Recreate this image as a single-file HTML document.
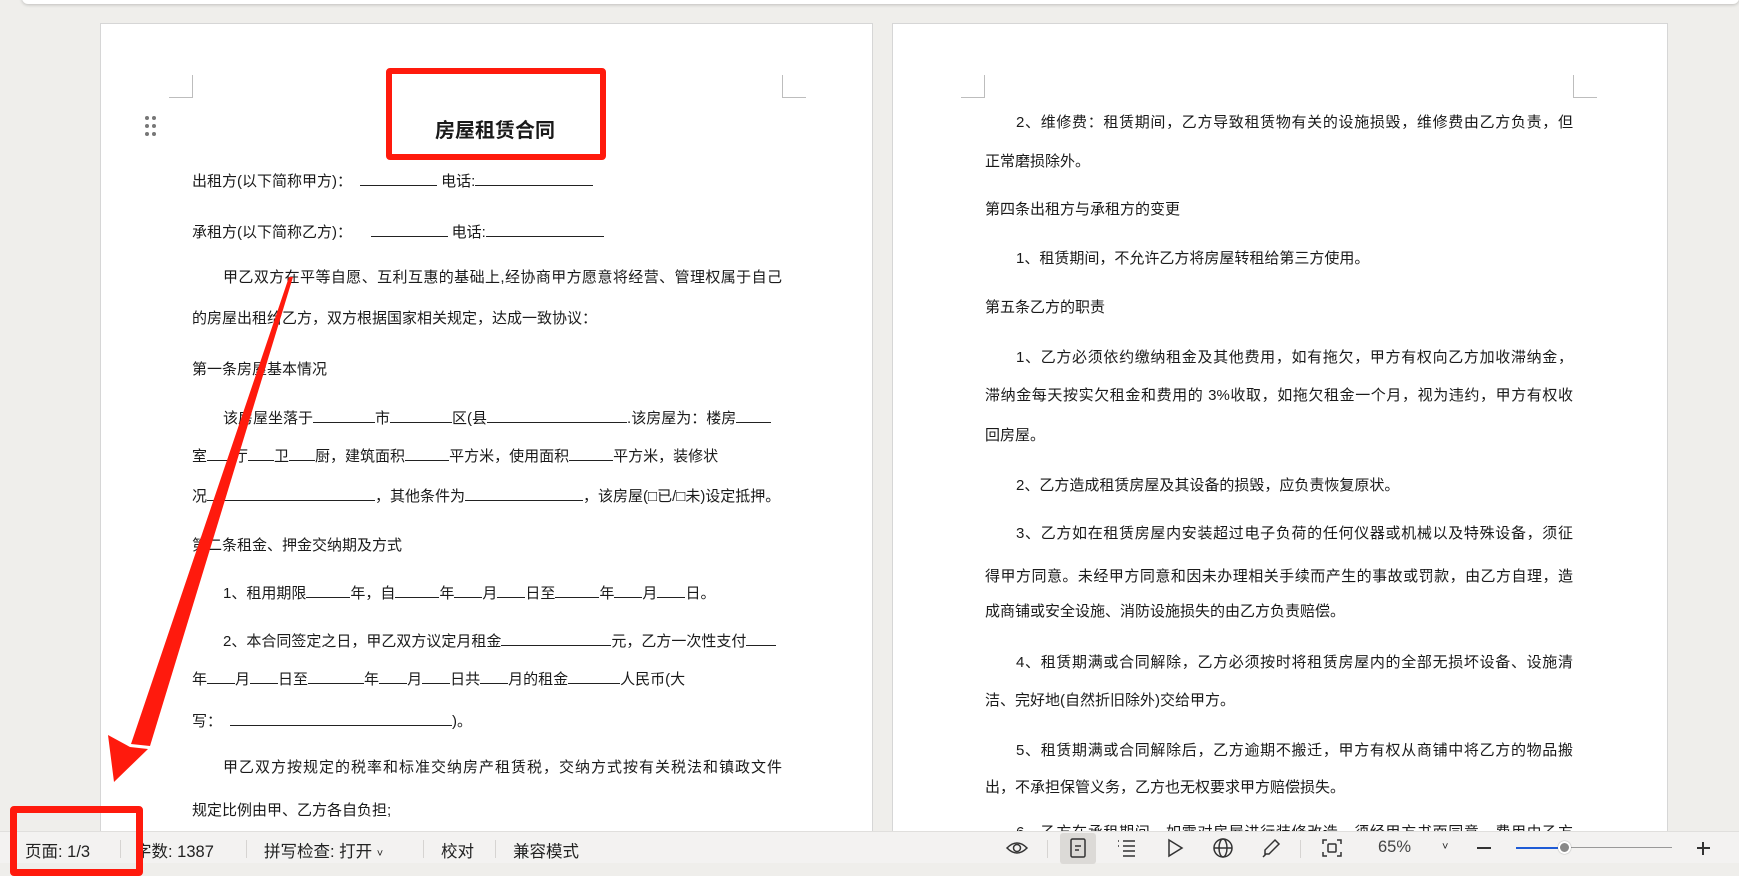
<!DOCTYPE html>
<html><head><meta charset="utf-8"><style>
*{margin:0;padding:0;box-sizing:border-box}
body{width:1739px;height:863px;overflow:hidden;background:#efeeeb;position:relative;font-family:"Liberation Sans","Noto Sans CJK SC",sans-serif;color:#1a1a1a}
.top{position:absolute;left:22px;top:-6px;right:0;height:10px;background:#fff;border-radius:0 0 6px 6px;box-shadow:0 1px 3px rgba(0,0,0,.2)}
.page{position:absolute;top:23px;height:830px;background:#fff;border:1px solid #d6d6d6}
.l{position:absolute;font-size:15px;line-height:20px;white-space:nowrap;height:20px}
.j{text-align:justify;text-align-last:justify;white-space:normal;overflow:hidden}
.u{display:inline-block;border-bottom:1px solid #222;height:14px;vertical-align:baseline}
.mk{position:absolute;border-color:#bdbdbd;border-style:solid;width:24px;height:23px}
.sb{position:absolute;left:0;top:831px;width:1739px;height:32px;background:#f3f2f1;border-top:1px solid #e0dfdd;font-size:16.5px;color:#222}
.sb span{position:absolute;top:6px}
.sep{position:absolute;top:8px;width:1px;height:18px;background:#d6d4d2}
.ic{position:absolute;top:5px}
</style></head><body>
<div class="top"></div>

<div class="page" style="left:100px;width:773px"></div>
<div class="page" style="left:892px;width:776px"></div>

<div class="mk" style="left:169px;top:75px;border-width:0 1px 1px 0"></div>
<div class="mk" style="left:782px;top:75px;border-width:0 0 1px 1px"></div>
<div class="mk" style="left:961px;top:75px;border-width:0 1px 1px 0"></div>
<div class="mk" style="left:1573px;top:75px;border-width:0 0 1px 1px"></div>

<svg style="position:absolute;left:144px;top:114px" width="14" height="24"><g fill="#777"><circle cx="3" cy="4" r="2"/><circle cx="10" cy="4" r="2"/><circle cx="3" cy="12" r="2"/><circle cx="10" cy="12" r="2"/><circle cx="3" cy="20" r="2"/><circle cx="10" cy="20" r="2"/></g></svg>

<div class="l" style="left:386px;width:218px;top:118px;text-align:center;font-size:20px;font-weight:bold;height:26px;line-height:26px">房屋租赁合同</div>

<div class="l" style="left:192px;top:172px">出租方(以下简称甲方)：<span class="u" style="width:77px;margin-left:8px"></span> 电话:<span class="u" style="width:118px"></span></div>
<div class="l" style="left:192px;top:223px">承租方(以下简称乙方)：&nbsp;&nbsp; <span class="u" style="width:77px;margin-left:6px"></span> 电话:<span class="u" style="width:118px"></span></div>
<div class="l j" style="left:192px;width:590px;top:268px;padding-left:31px">甲乙双方在平等自愿、互利互惠的基础上,经协商甲方愿意将经营、管理权属于自己</div>
<div class="l" style="left:192px;top:309px">的房屋出租给乙方，双方根据国家相关规定，达成一致协议：</div>
<div class="l" style="left:192px;top:360px">第一条房屋基本情况</div>
<div class="l" style="left:223px;top:409px">该房屋坐落于<span class="u" style="width:62px"></span>市<span class="u" style="width:62px"></span>区(县<span class="u" style="width:140px"></span>.该房屋为：楼房<span class="u" style="width:35px"></span></div>
<div class="l" style="left:192px;top:447px">室<span class="u" style="width:26px"></span>厅<span class="u" style="width:26px"></span>卫<span class="u" style="width:26px"></span>厨，建筑面积<span class="u" style="width:44px"></span>平方米，使用面积<span class="u" style="width:44px"></span>平方米，装修状</div>
<div class="l" style="left:192px;top:487px">况<span class="u" style="width:168px"></span>，其他条件为<span class="u" style="width:118px"></span>，该房屋(□已/□未)设定抵押。</div>
<div class="l" style="left:192px;top:536px">第二条租金、押金交纳期及方式</div>
<div class="l" style="left:223px;top:584px">1、租用期限<span class="u" style="width:44px"></span>年，自<span class="u" style="width:44px"></span>年<span class="u" style="width:28px"></span>月<span class="u" style="width:28px"></span>日至<span class="u" style="width:44px"></span>年<span class="u" style="width:28px"></span>月<span class="u" style="width:28px"></span>日。</div>
<div class="l" style="left:223px;top:632px">2、本合同签定之日，甲乙双方议定月租金<span class="u" style="width:110px"></span>元，乙方一次性支付<span class="u" style="width:30px"></span></div>
<div class="l" style="left:192px;top:670px">年<span class="u" style="width:28px"></span>月<span class="u" style="width:28px"></span>日至<span class="u" style="width:56px"></span>年<span class="u" style="width:28px"></span>月<span class="u" style="width:28px"></span>日共<span class="u" style="width:28px"></span>月的租金<span class="u" style="width:52px"></span>人民币(大</div>
<div class="l" style="left:192px;top:712px">写：<span class="u" style="width:222px;margin-left:8px"></span>)。</div>
<div class="l j" style="left:192px;width:590px;top:758px;padding-left:31px">甲乙双方按规定的税率和标准交纳房产租赁税，交纳方式按有关税法和镇政文件</div>
<div class="l" style="left:192px;top:801px">规定比例由甲、乙方各自负担;</div>

<div class="l j" style="left:985px;width:588px;top:113px;padding-left:31px">2、维修费：租赁期间，乙方导致租赁物有关的设施损毁，维修费由乙方负责，但</div>
<div class="l" style="left:985px;top:152px">正常磨损除外。</div>
<div class="l" style="left:985px;top:200px">第四条出租方与承租方的变更</div>
<div class="l" style="left:1016px;top:249px">1、租赁期间，不允许乙方将房屋转租给第三方使用。</div>
<div class="l" style="left:985px;top:298px">第五条乙方的职责</div>
<div class="l j" style="left:985px;width:588px;top:348px;padding-left:31px">1、乙方必须依约缴纳租金及其他费用，如有拖欠，甲方有权向乙方加收滞纳金，</div>
<div class="l j" style="left:985px;width:588px;top:386px">滞纳金每天按实欠租金和费用的 3%收取，如拖欠租金一个月，视为违约，甲方有权收</div>
<div class="l" style="left:985px;top:426px">回房屋。</div>
<div class="l" style="left:1016px;top:476px">2、乙方造成租赁房屋及其设备的损毁，应负责恢复原状。</div>
<div class="l j" style="left:985px;width:588px;top:524px;padding-left:31px">3、乙方如在租赁房屋内安装超过电子负荷的任何仪器或机械以及特殊设备，须征</div>
<div class="l j" style="left:985px;width:588px;top:567px">得甲方同意。未经甲方同意和因未办理相关手续而产生的事故或罚款，由乙方自理，造</div>
<div class="l" style="left:985px;top:602px">成商铺或安全设施、消防设施损失的由乙方负责赔偿。</div>
<div class="l j" style="left:985px;width:588px;top:653px;padding-left:31px">4、租赁期满或合同解除，乙方必须按时将租赁房屋内的全部无损坏设备、设施清</div>
<div class="l" style="left:985px;top:691px">洁、完好地(自然折旧除外)交给甲方。</div>
<div class="l j" style="left:985px;width:588px;top:741px;padding-left:31px">5、租赁期满或合同解除后，乙方逾期不搬迁，甲方有权从商铺中将乙方的物品搬</div>
<div class="l" style="left:985px;top:778px">出，不承担保管义务，乙方也无权要求甲方赔偿损失。</div>
<div class="l j" style="left:985px;width:588px;top:823px;padding-left:31px">6、乙方在承租期间，如需对房屋进行装修改造，须经甲方书面同意，费用由乙方</div>

<div style="position:absolute;left:386px;top:68px;width:220px;height:92px;border:6px solid #ff1a0d;border-radius:4px"></div>
<svg style="position:absolute;left:0;top:0" width="400" height="863">
<polygon points="289,277 293,277 150,746 131,744" fill="#ff1a0d"/>
<polygon points="114,782 108,735 130,747 148,749" fill="#ff1a0d"/>
</svg>

<div class="sb">
<span style="left:25px">页面: 1/3</span>
<div class="sep" style="left:120px"></div>
<span style="left:135px">字数: 1387</span>
<div class="sep" style="left:246px"></div>
<span style="left:264px">拼写检查: 打开 <small style="font-size:11px">˅</small></span>
<div class="sep" style="left:423px"></div>
<span style="left:441px">校对</span>
<div class="sep" style="left:495px"></div>
<span style="left:513px">兼容模式</span>

<svg class="ic" style="left:1005px" width="24" height="22" fill="none" stroke="#333" stroke-width="1.5"><path d="M2 11 Q12 1 22 11 Q12 21 2 11Z"/><circle cx="12" cy="11" r="3.5"/></svg>
<div class="sep" style="left:1047px"></div>
<div style="position:absolute;left:1060px;top:1px;width:36px;height:31px;background:#dcdad7;border-radius:3px"></div>
<svg class="ic" style="left:1068px" width="20" height="22" fill="none" stroke="#333" stroke-width="1.5"><rect x="3" y="2" width="14" height="18" rx="1.5"/><path d="M7 9h6M7 13h4"/></svg>
<svg class="ic" style="left:1115px" width="22" height="22" fill="none" stroke="#333" stroke-width="1.5"><path d="M8 4h12M8 9h12M8 14h12M8 19h12M3 4h1M3 9h1"/></svg>
<svg class="ic" style="left:1165px" width="20" height="22" fill="none" stroke="#333" stroke-width="1.5"><path d="M4 3 L17 11 L4 19Z"/></svg>
<svg class="ic" style="left:1211px" width="24" height="22" fill="none" stroke="#333" stroke-width="1.5"><circle cx="12" cy="11" r="9"/><ellipse cx="12" cy="11" rx="4" ry="9"/><path d="M3 11h18"/></svg>
<svg class="ic" style="left:1259px" width="22" height="22" fill="none" stroke="#333" stroke-width="1.5"><path d="M16 3 L20 7 L10 17 L6 17 L6 13 Z M4 20 L7 17"/></svg>
<div class="sep" style="left:1300px"></div>
<svg class="ic" style="left:1320px" width="24" height="22" fill="none" stroke="#333" stroke-width="1.5"><path d="M3 7V3h4M17 3h4v4M21 15v4h-4M7 19H3v-4"/><rect x="8" y="7" width="8" height="8" rx="1"/></svg>
<span style="left:1378px;color:#444">65%</span>
<span style="left:1442px;font-size:11px;top:9px">˅</span>
<div style="position:absolute;left:1477px;top:15px;width:14px;height:2px;background:#333"></div>
<div style="position:absolute;left:1516px;top:15px;width:50px;height:2px;background:#1e5bd6"></div>
<div style="position:absolute;left:1566px;top:15px;width:106px;height:1px;background:#999"></div>
<div style="position:absolute;left:1558px;top:9px;width:13px;height:13px;border-radius:50%;background:#888;border:2px solid #fff;box-shadow:0 0 1px #666"></div>
<div style="position:absolute;left:1697px;top:15px;width:13px;height:2px;background:#333"></div>
<div style="position:absolute;left:1702px;top:10px;width:2px;height:13px;background:#333"></div>
</div>

<div style="position:absolute;left:10px;top:806px;width:133px;height:70px;border:7px solid #ff1a0d;border-radius:4px"></div>
</body></html>
